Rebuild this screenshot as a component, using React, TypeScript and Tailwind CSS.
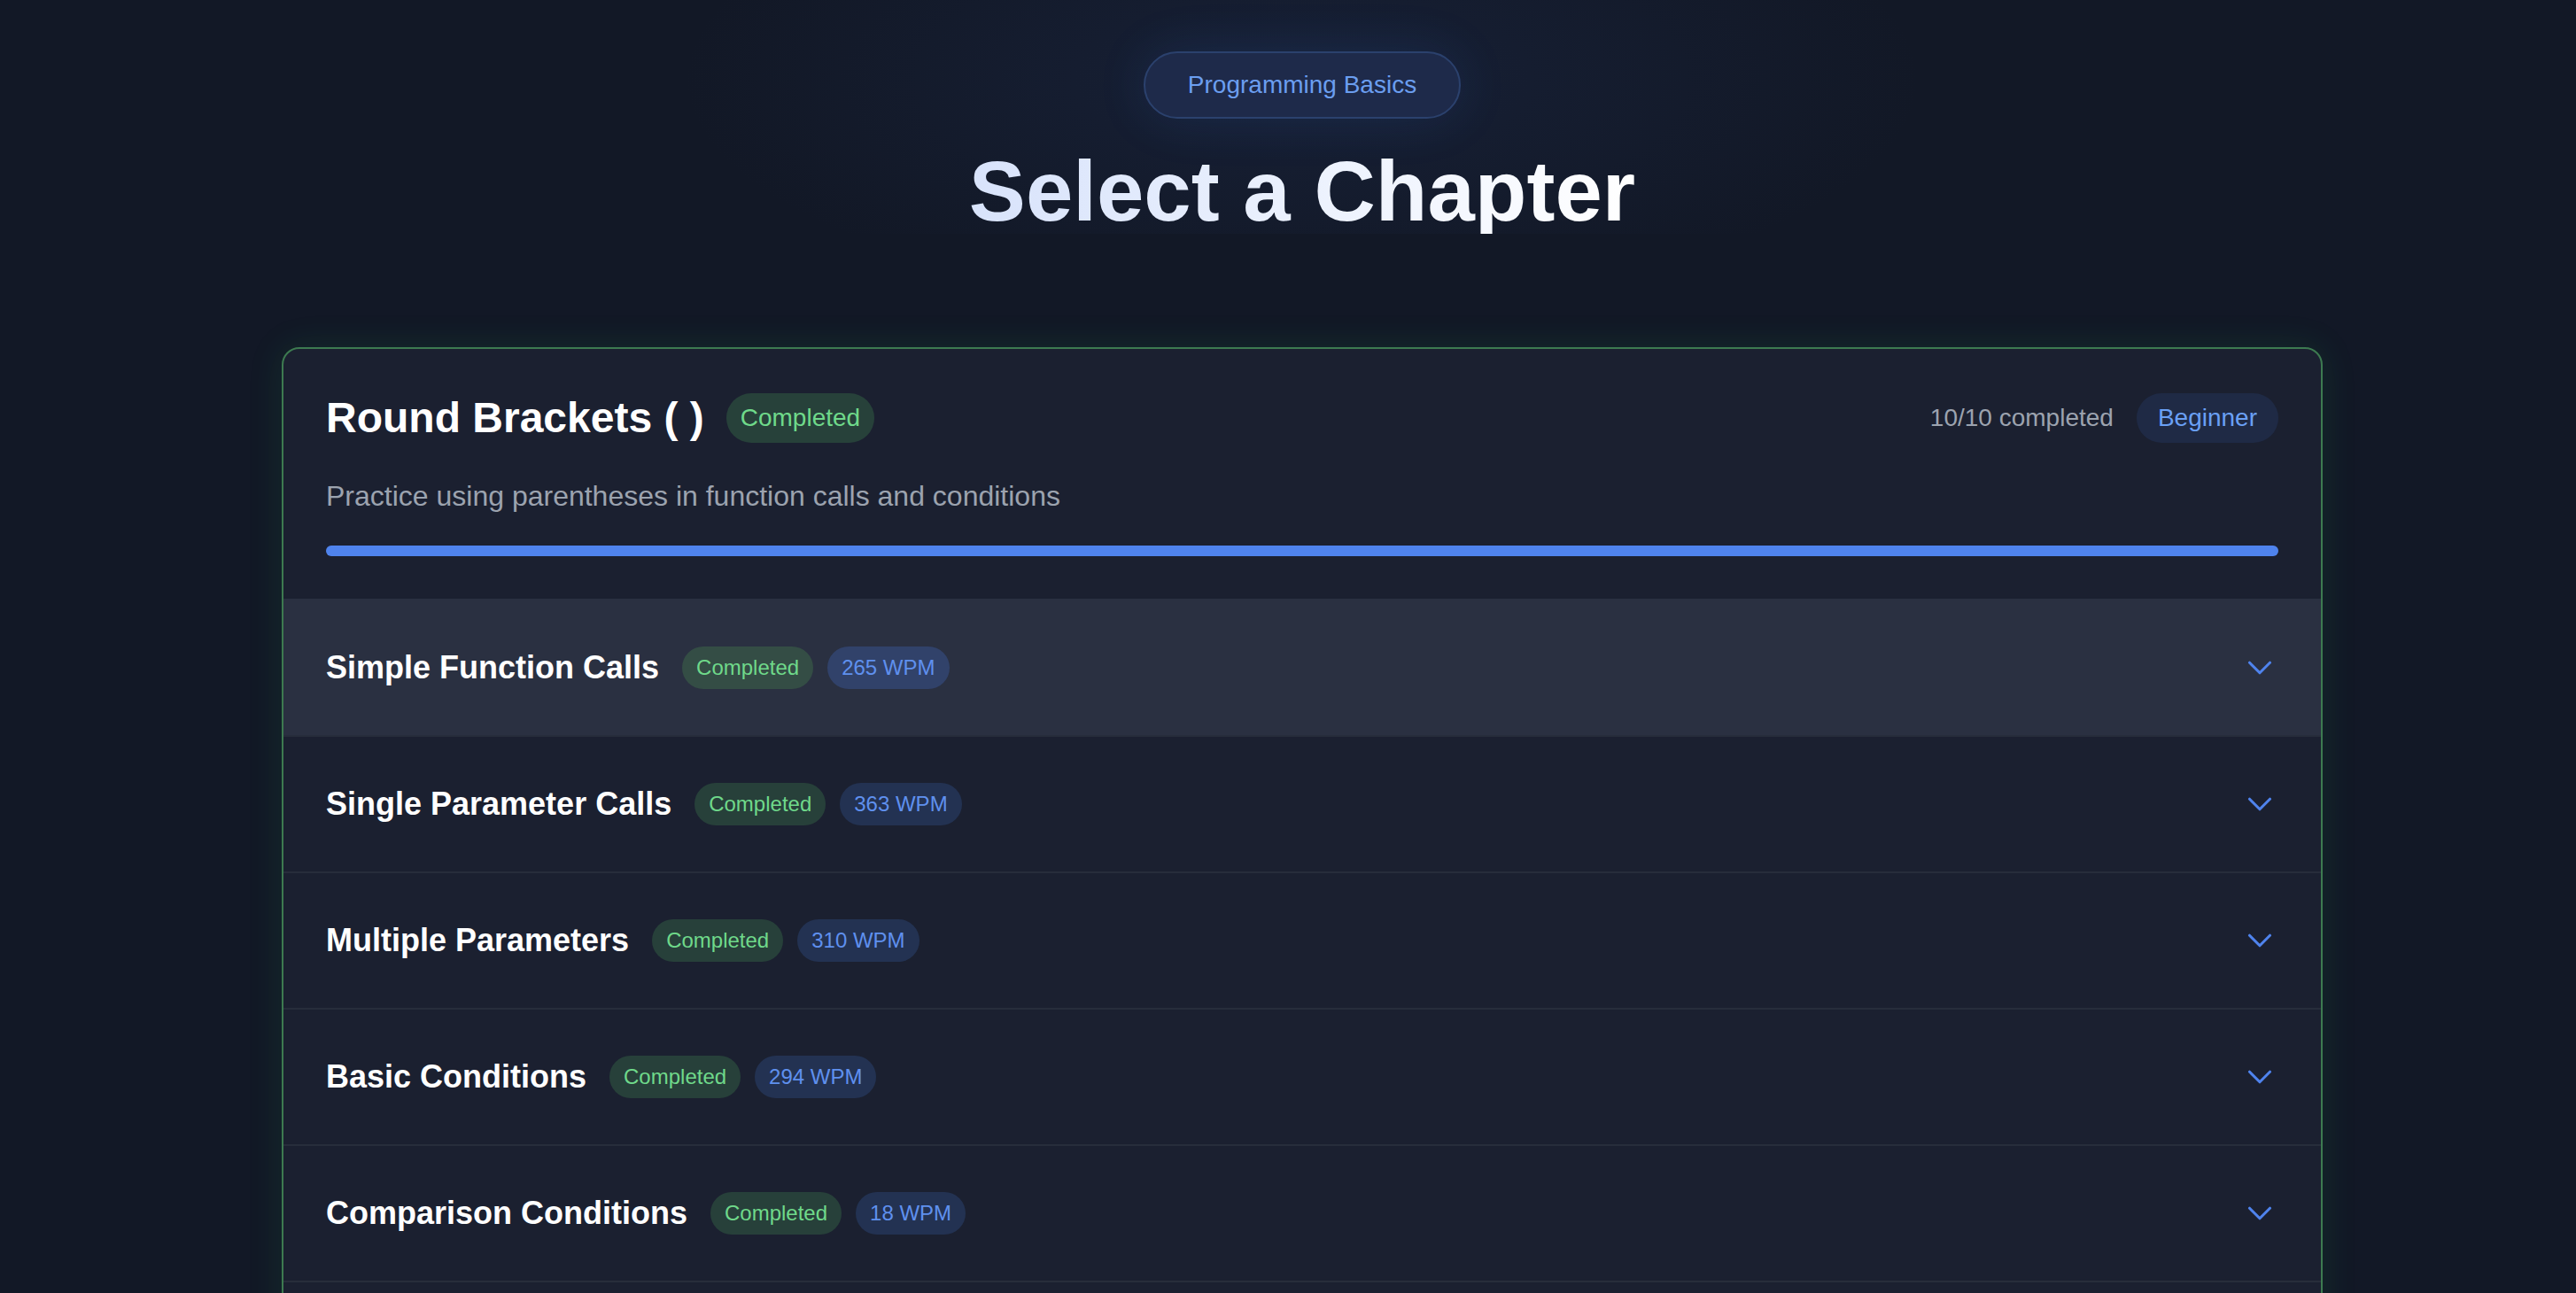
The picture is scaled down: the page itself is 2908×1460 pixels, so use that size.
import { ChevronDown } from "lucide-react";

type Lesson = {
  title: string;
  wpm: number;
};

const lessons: Lesson[] = [
  { title: "Simple Function Calls", wpm: 265 },
  { title: "Single Parameter Calls", wpm: 363 },
  { title: "Multiple Parameters", wpm: 310 },
  { title: "Basic Conditions", wpm: 294 },
  { title: "Comparison Conditions", wpm: 18 },
  { title: "Nested Calls", wpm: 241 },
];

function LessonRow({ lesson, active }: { lesson: Lesson; active?: boolean }) {
  return (
    <div
      className={`flex items-center justify-between px-[48px] pb-[48px] border-b-2 border-[#272d3b] ${
        active ? "bg-[#2a3041] pt-[50px]" : "bg-transparent pt-[48px]"
      }`}
    >
      <div className="flex items-center">
        <h3 className="text-[36px] leading-[56px] font-bold text-white">{lesson.title}</h3>
        <span
          className={`ml-[26px] rounded-full px-[16px] py-[8px] text-[24px] leading-[32px] text-[#6fd98a] ${
            active ? "bg-[#344d45]" : "bg-[#27403a]"
          }`}
        >
          Completed
        </span>
        <span
          className={`ml-[16px] rounded-full px-[16px] py-[8px] text-[24px] leading-[32px] text-[#5f90ee] ${
            active ? "bg-[#31426a]" : "bg-[#233252]"
          }`}
        >
          {lesson.wpm} WPM
        </span>
      </div>
      <ChevronDown className="w-[46px] h-[46px] -mr-[2px] text-[#4f83ed]" strokeWidth={1.6} />
    </div>
  );
}

export default function App() {
  return (
    <div
      className="min-h-screen bg-[#121826] text-white pl-[32px]"
      style={{ fontFamily: '"Liberation Sans", Arial, sans-serif' }}
    >
      {/* Page heading */}
      <header className="flex flex-col items-center pt-[58px] bg-[radial-gradient(ellipse_700px_260px_at_50%_90px,rgba(40,60,110,0.22),transparent)]">
        <span className="rounded-full border-2 border-[#2b416d] bg-[#1e2a4a] px-[48px] py-[16px] text-[28px] leading-[40px] text-[#6b9ef0] shadow-[0_0_60px_rgba(59,130,246,0.12)]">
          Programming Basics
        </span>
        <h1 className="mt-[34px] text-[96px] leading-[96px] font-bold bg-linear-to-r from-[#d8e3fb] to-white bg-clip-text text-transparent">
          Select a Chapter
        </h1>
      </header>

      {/* Chapter card */}
      <main className="mx-auto mt-[128px] w-[2304px]">
        <section className="rounded-[20px] border-2 border-[#3d7a50] bg-[#1b2030] overflow-hidden shadow-[0_0_40px_rgba(34,197,94,0.12)]">
          <div className="px-[48px] pt-[46px] pb-[48px]">
            <div className="flex items-center justify-between">
              <div className="flex items-center">
                <h2 className="text-[48px] leading-[64px] font-bold text-white">Round Brackets ( )</h2>
                <span className="ml-[25px] rounded-full bg-[#27413a] px-[16px] py-[8px] text-[28px] leading-[40px] text-[#6fd98a]">
                  Completed
                </span>
              </div>
              <div className="flex items-center gap-[26px]">
                <span className="text-[28px] leading-[40px] text-[#9ca3af]">10/10 completed</span>
                <span className="rounded-full bg-[#1f2a45] px-[24px] py-[8px] text-[28px] leading-[40px] text-[#6aa0f5]">
                  Beginner
                </span>
              </div>
            </div>
            <p className="mt-[32px] text-[32px] leading-[48px] text-[#9ca3af]">
              Practice using parentheses in function calls and conditions
            </p>
            <div className="mt-[32px] h-[12px] w-full rounded-full bg-[#2a3142]">
              <div className="h-full rounded-full bg-[#4f83ed]" style={{ width: "100%" }} />
            </div>
          </div>

          <div>
            {lessons.map((lesson, i) => (
              <LessonRow key={lesson.title} lesson={lesson} active={i === 0} />
            ))}
          </div>
        </section>
      </main>
    </div>
  );
}
